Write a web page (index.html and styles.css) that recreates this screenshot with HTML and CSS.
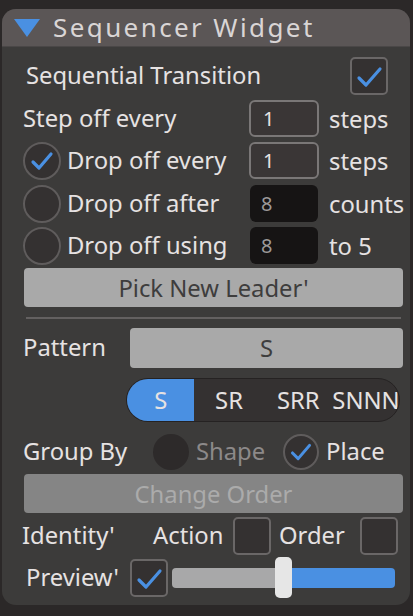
FILE: index.html
```html
<!DOCTYPE html>
<html>
<head>
<meta charset="utf-8">
<link rel="stylesheet" href="styles.css">
</head>
<body>
<div class="panel">
  <div class="header">
    <svg class="tri" width="26" height="18" viewBox="0 0 26 18"><polygon points="0,0 26,0 13,18" fill="#4a90e2"/></svg>
    <span class="title">Sequencer Widget</span>
  </div>
  <div class="body">
    <div class="row r1">
      <span class="lbl seq">Sequential Transition</span>
      <span class="cb checked seq-cb"><svg viewBox="0 0 38 38"><polyline points="9,21 16,28 30,12" fill="none" stroke="#4a90e2" stroke-width="3.2" stroke-linecap="round" stroke-linejoin="round"/></svg></span>
    </div>
    <div class="row num">
      <span class="left"><span class="lbl">Step off every</span></span>
      <span class="inp active">1</span>
      <span class="unit">steps</span>
    </div>
    <div class="row num">
      <span class="left"><span class="radio"><svg viewBox="0 0 38 38"><polyline points="10,20 16,26 28,12" fill="none" stroke="#4a90e2" stroke-width="3.2" stroke-linecap="round" stroke-linejoin="round"/></svg></span><span class="lbl">Drop off every</span></span>
      <span class="inp active">1</span>
      <span class="unit">steps</span>
    </div>
    <div class="row num r4">
      <span class="left"><span class="radio"></span><span class="lbl">Drop off after</span></span>
      <span class="inp dark">8</span>
      <span class="unit">counts</span>
    </div>
    <div class="row num">
      <span class="left"><span class="radio"></span><span class="lbl">Drop off using</span></span>
      <span class="inp dark">8</span>
      <span class="unit">to 5</span>
    </div>
    <div class="btn pick">Pick New Leader'</div>
    <div class="sep"></div>
    <div class="row pattern">
      <span class="lbl">Pattern</span>
      <div class="pbar">S</div>
    </div>
    <div class="seg">
      <span class="segi on">S</span>
      <span class="segi">SR</span>
      <span class="segi">SRR</span>
      <span class="segi">SNNN</span>
    </div>
    <div class="row group">
      <span class="lbl gb">Group By</span>
      <span class="radio off"></span>
      <span class="lbl dim">Shape</span>
      <span class="radio place"><svg viewBox="0 0 38 38"><polyline points="10,20 16,26 28,12" fill="none" stroke="#4a90e2" stroke-width="3.2" stroke-linecap="round" stroke-linejoin="round"/></svg></span>
      <span class="lbl">Place</span>
    </div>
    <div class="btn change">Change Order</div>
    <div class="row ident">
      <span class="lbl idl">Identity'</span>
      <span class="lbl act">Action</span>
      <span class="cb"></span>
      <span class="lbl ord">Order</span>
      <span class="cb"></span>
    </div>
    <div class="row preview">
      <span class="lbl prl">Preview'</span>
      <span class="cb checked"><svg viewBox="0 0 38 38"><polyline points="9,21 16,28 30,12" fill="none" stroke="#4a90e2" stroke-width="3.2" stroke-linecap="round" stroke-linejoin="round"/></svg></span>
      <div class="slider">
        <div class="track"><div class="fill-l" style="width:111px"></div><div class="fill-r"></div></div>
        <div class="thumb" style="left:103px"></div>
      </div>
    </div>
  </div>
</div>
</body>
</html>
```
FILE: styles.css
```css
html, body {
  margin: 0;
  padding: 0;
  background: #2b2828;
  width: 413px;
  height: 616px;
  overflow: hidden;
  font-family: "Noto Sans", "Open Sans", sans-serif;
  color: #e6e2e2;
}
.panel {
  margin: 9px 0 0 2px;
  width: 408px;
  height: 596px;
  background: #3c3b3a;
  border-radius: 14px;
  overflow: hidden;
  display: flex;
  flex-direction: column;
}
.header {
  height: 38px;
  background: #5b5656;
  display: flex;
  align-items: center;
  border-bottom: 1px solid #4a4747;
  box-sizing: border-box;
}
.tri {
  margin-left: 12px;
  margin-top: 1px;
}
.title {
  margin-left: 13px;
  font-size: 26px;
  letter-spacing: 2.4px;
  color: #d9d5d5;
  line-height: 1;
  margin-top: -2px;
}
.body {
  padding: 10px 7px 0 20px;
  display: flex;
  flex-direction: column;
}
.row {
  display: flex;
  align-items: center;
  height: 37px;
  margin-top: 5px;
}
.lbl {
  font-size: 23.8px;
  line-height: 1;
  white-space: nowrap;
}
.r1 {
  height: 38px;
  margin-top: 0;
}
.seq { margin-left: 4px; }
.seq-cb { margin-left: auto; margin-right: 15px; }
.cb {
  width: 38px;
  height: 38px;
  box-sizing: border-box;
  border: 2px solid #6a6767;
  border-radius: 5px;
  background: #343131;
  display: inline-flex;
  flex: none;
}
.cb svg { width: 38px; height: 38px; margin: -2px; flex: none; }
.radio {
  width: 38px;
  height: 38px;
  box-sizing: border-box;
  border-radius: 50%;
  border: 2px solid #5f5c5c;
  background: #343131;
  display: inline-flex;
  flex: none;
}
.radio svg { width: 38px; height: 38px; margin: -2px; flex: none; }
.num .left {
  width: 227px;
  display: flex;
  align-items: center;
  flex: none;
}
.num .left .lbl { margin-left: 1px; }
.num .left .radio { margin-left: 1px; margin-right: 6px; }
.num .left .radio + .lbl { margin-left: 0; }
.inp {
  width: 70px;
  height: 37px;
  box-sizing: border-box;
  border-radius: 6px;
  font-size: 20px;
  display: flex;
  align-items: center;
  padding-left: 12px;
  flex: none;
}
.inp.active {
  border: 2px solid #7a7777;
  background: #3a3636;
  color: #e8e4e4;
}
.inp.dark {
  background: #161414;
  color: #9c9999;
  margin-left: 1px;
  width: 68px;
  padding-left: 11px;
}
.unit {
  margin-left: 10px;
  font-size: 23.8px;
}
.inp.dark + .unit { margin-left: 11px; }
.r4 { margin-top: 6px; }
.btn {
  height: 39px;
  border-radius: 4px;
  margin-left: 2px;
  display: flex;
  align-items: center;
  justify-content: center;
  font-size: 23.8px;
}
.pick {
  margin-top: 4px;
  background: #a9a9a9;
  color: #3e3d3d;
}
.sep {
  height: 2px;
  background: #636060;
  margin: 10px 2px 9px 4px;
}
.pattern {
  height: 40px;
  margin-top: 0;
}
.pattern .lbl { margin-left: 1px; }
.pbar {
  margin-left: auto;
  width: 273px;
  height: 40px;
  background: #a9a9a9;
  border-radius: 4px;
  color: #3e3d3d;
  font-size: 23.8px;
  display: flex;
  align-items: center;
  justify-content: center;
}
.seg {
  margin: 10px 3px 0 104px;
  height: 44px;
  box-sizing: border-box;
  border-radius: 22px;
  background: #343131;
  border: 1px solid #252222;
  display: flex;
  overflow: hidden;
  font-size: 23.8px;
}
.segi {
  display: flex;
  align-items: center;
  justify-content: center;
  width: 70px;
  color: #e6e2e2;
  white-space: nowrap;
}
.segi.on {
  background: #4a90e2;
  width: 68px;
}
.segi:last-child { width: 66px; flex: none; }
.group { margin-top: 11px; }
.gb { margin-left: 1px; width: 130px; }
.radio.off {
  width: 36px;
  height: 36px;
  border: none;
  background: #2d2a2a;
}
.dim { color: #8c8989; margin-left: 7px; width: 87px; }
.radio.place { width: 36px; height: 36px; margin-right: 7px; }
.radio.place svg { width: 36px; height: 36px; }
.change {
  margin-top: 4px;
  background: #858585;
  color: #ababab;
}
.ident { margin-top: 4px; }
.idl { margin-left: 0; width: 131px; }
.act { margin-right: 8px; width: 72px; }
.ord { margin-left: 8px; width: 81px; }
.preview { margin-top: 3px; height: 41px; }
.prl { margin-left: 4px; width: 104px; }
.slider {
  position: relative;
  margin-left: 4px;
  width: 223px;
  height: 41px;
  display: flex;
  align-items: center;
}
.track {
  width: 100%;
  height: 20px;
  border-radius: 4px;
  overflow: hidden;
  display: flex;
}
.fill-l { background: #a8a8a9; height: 100%; }
.fill-r { background: #4a90e2; flex: 1; height: 100%; }
.thumb {
  position: absolute;
  top: 0;
  width: 17px;
  height: 41px;
  border-radius: 5px;
  background: #e6e6e6;
}
```
